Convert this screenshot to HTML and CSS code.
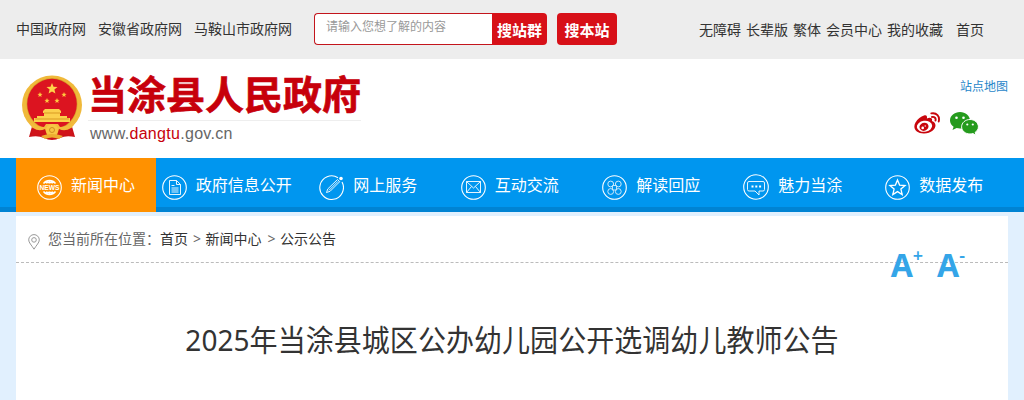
FILE: index.html
```html
<!DOCTYPE html>
<html lang="zh-CN">
<head>
    <meta charset="UTF-8">
    <meta name="viewport" content="width=device-width, initial-scale=1.0">
    <title>2025年当涂县城区公办幼儿园公开选调幼儿教师公告</title>
    <link rel="stylesheet" href="styles.css">
</head>
<body>

<div class="topbar">
    <div class="container topbar-inner">
        <div class="gov-links">
            <a href="#">中国政府网</a>
            <a href="#">安徽省政府网</a>
            <a href="#">马鞍山市政府网</a>
        </div>
        <form class="search">
            <input type="text" class="search-input" placeholder="请输入您想了解的内容">
            <button type="button" class="btn-group">搜站群</button>
            <button type="button" class="btn-site">搜本站</button>
        </form>
        <div class="user-links">
            <a href="#">无障碍</a>
            <a href="#">长辈版</a>
            <a href="#">繁体</a>
            <a href="#">会员中心</a>
            <a href="#">我的收藏</a>
            <a href="#" class="home">首页</a>
        </div>
    </div>
</div>

<header class="header">
    <div class="container header-inner">
        <div class="logo">
            <svg class="emblem" width="62" height="66" viewBox="0 0 62 66">
                <path d="M12 48L8 62Q17 60 23 63Q31 67 39 63Q45 60 54 62L50 48Z" fill="#c9121a"/>
                <ellipse cx="31" cy="30" rx="30" ry="29.5" fill="#f0b93a"/>
                <ellipse cx="31" cy="29" rx="25.5" ry="26" fill="#d8a02b"/>
                <ellipse cx="31" cy="29" rx="24.8" ry="25.3" fill="#dc1420"/>
                <path d="M31 8l1.5 3.700 4 .3-3.100 2.600 1 3.900-3.400-2.100-3.400 2.100 1-3.900-3.100-2.600 4-.3z" fill="#ffd34a"/>
                <path d="M19 17l.7 1.800 1.900.1-1.500 1.200.5 1.900-1.600-1-1.600 1 .5-1.900-1.500-1.200 1.900-.1zM43 17l.7 1.800 1.900.1-1.500 1.200.5 1.900-1.600-1-1.600 1 .5-1.900-1.500-1.200 1.900-.1zM26 23l.7 1.800 1.900.1-1.500 1.200.5 1.900-1.600-1-1.600 1 .5-1.900-1.500-1.200 1.900-.1zM36 23l.7 1.800 1.900.1-1.500 1.200.5 1.900-1.600-1-1.600 1 .5-1.900-1.500-1.200 1.900-.1z" fill="#ffc83e"/>
                <path d="M22 36l2-2h14l2 2v2h-1v3h7v2h3v4H13v-4h3v-2h7v-3h-1z" fill="#fcd04d"/>
                <path d="M23 38h16M14 44h34" stroke="#d99a24" fill="none"/>
                <path d="M6 45Q14 52 23 52L25 49H37L39 52Q48 52 56 45L49 55Q42 57 38 55L36 60H26L24 55Q20 57 13 55Z" fill="#f3bb3d"/>
                <path d="M12 53Q18 57 24 54L26 60Q19 59 10 61ZM50 53Q44 57 38 54L36 60Q43 59 52 61Z" fill="#d0131a"/>
                <circle cx="31" cy="55" r="6" fill="#f8c645"/>
                <circle cx="31" cy="55" r="2.500" fill="none" stroke="#cf8d22"/>
                <path d="M20 61q11-4 22 0l-4 3q-7-3-14 0z" fill="#edae31"/>
            </svg>
            <div class="logo-text">
                <h1>当涂县人民政府</h1>
                <p>www.<span>dangtu</span>.gov.cn</p>
            </div>
        </div>
        <div class="header-side">
            <a href="#" class="sitemap">站点地图</a>
            <div class="social">
                <svg width="27" height="23" viewBox="0 0 27 23">
                    <path d="M10 3.500c2.200-1 3.500.4 2.900 2.900 3.600-1.300 6-.3 5 2.700 7 2.400 3.400 12.200-7.900 12.400C2.300 21.600-1.800 16.500 1.500 10.500 3.500 7 7 4.500 10 3.500z" fill="#c8060d"/>
                    <ellipse cx="10.500" cy="14.300" rx="7.700" ry="5.500" fill="#fff" transform="rotate(-8 10.500 14.300)"/>
                    <ellipse cx="10" cy="14.800" rx="4.600" ry="4" fill="#c8060d" transform="rotate(-20 10 14.800)"/>
                    <circle cx="8.700" cy="15.900" r="1.300" fill="#fff"/>
                    <circle cx="11.200" cy="14" r=".7" fill="#fff"/>
                    <path d="M17.300 1.400c5.300-1 8.800 3 7.400 8.100M18 5c2.600-.5 4.100 1.300 3.500 3.600" fill="none" stroke="#c8060d" stroke-width="1.900" stroke-linecap="round"/>
                </svg>
                <svg width="29" height="24" viewBox="0 0 29 24">
                    <path d="M10 0C4.500 0 0 3.700 0 8.400c0 2.600 1.400 4.800 3.600 6.300L2.500 18l4.100-2c1.100.3 2.200.5 3.400.5 5.500 0 10-3.600 10-8.100S15.500 0 10 0z" fill="#259b1d"/>
                    <path d="M20 7.500c-4.600 0-8.400 3.200-8.400 7.300s3.800 7.200 8.400 7.200c1 0 2-.2 2.900-.5l3.100 1.800-.9-2.900c2-1.300 3.300-3.300 3.300-5.600 0-4.100-3.800-7.300-8.400-7.300z" fill="#259b1d" stroke="#fff"/>
                    <g fill="#fff">
                        <circle cx="6.500" cy="5.700" r="1.300"/><circle cx="13.500" cy="5.700" r="1.300"/>
                        <circle cx="17.300" cy="12.500" r="1.100"/><circle cx="22.800" cy="12.500" r="1.100"/>
                    </g>
                </svg>
            </div>
        </div>
    </div>
</header>

<nav class="nav">
    <div class="container nav-inner">
        <a href="#" class="active">
            <svg class="icon" viewBox="0 0 25 25">
                <circle cx="12.500" cy="12.500" r="11.800"/>
                <path class="globe" d="M6.500 8.500a7.500 7.500 0 0 1 12 0M6.500 16.500a7.500 7.500 0 0 0 12 0M12.500 5.500v3M12.500 16.500v3M9 7.500h7M9 17.500h7M9.500 6v2.500M15.500 6v2.500M9.500 16.500V19M15.500 16.500V19"/>
                <text x="12.500" y="15.100" textLength="20" lengthAdjust="spacingAndGlyphs">NEWS</text>
            </svg>
            新闻中心
        </a>
        <a href="#">
            <svg class="icon" viewBox="0 0 25 25">
                <circle cx="12.500" cy="12.500" r="11.800"/>
                <path d="M7.500 5.500h7l4 4v10h-11zM14.500 5.500v4h4M9.500 10.500h3M9.500 13h7M9.500 15h7M9.500 17h7"/>
            </svg>
            政府信息公开
        </a>
        <a href="#">
            <svg class="icon" viewBox="0 0 25 25">
                <path d="M19 2.700A11.800 11.800 0 1 0 23 7" class="ring"/>
                <path d="M7.500 17.500l1.300-3.600L18.500 4.500l2.200 2.200-9.600 9.600zM10 15.300l9-9"/>
                <circle cx="22" cy="3.500" r="1.800" class="solid"/>
            </svg>
            网上服务
        </a>
        <a href="#">
            <svg class="icon" viewBox="0 0 25 25">
                <circle cx="12.500" cy="12.500" r="11.800"/>
                <path d="M5.500 6.500h14v11h-14zM5.500 6.500l7 6.500 7-6.500M5.500 17.500l5-6M19.500 17.500l-5-6"/>
            </svg>
            互动交流
        </a>
        <a href="#">
            <svg class="icon" viewBox="0 0 25 25">
                <circle cx="12.500" cy="12.500" r="11.800"/>
                <g class="clover">
                    <circle cx="8.700" cy="9" r="2.900"/><circle cx="16.300" cy="9" r="2.900"/>
                    <circle cx="8.700" cy="16.500" r="2.900"/><circle cx="16.300" cy="16.500" r="2.900"/>
                    <path d="M10.500 10.500h4v4.500h-4z"/>
                </g>
            </svg>
            解读回应
        </a>
        <a href="#">
            <svg class="icon icon-chat" viewBox="0 0 26 26">
                <circle cx="13" cy="13" r="12.300"/>
                <path d="M7 7.500h13q1.500 0 1.500 1.500v6.500q0 1.500-1.500 1.500h-4v4l-4-4H6q-1.500 0-1.500-1.500V9q0-1.500 1.500-1.500z"/>
                <path d="M8.500 12.500h2M12.300 12.500h2M16.100 12.500h2" class="dots"/>
            </svg>
            魅力当涂
        </a>
        <a href="#">
            <svg class="icon" viewBox="0 0 25 25">
                <circle cx="12.500" cy="12.500" r="11.800"/>
                <path class="star" d="M12.500 5l2.100 5.100 5.500.4-4.200 3.600 1.300 5.400-4.700-2.900-4.700 2.900 1.300-5.400-4.200-3.600 5.500-.4z"/>
            </svg>
            数据发布
        </a>
    </div>
</nav>

<main class="container content">
    <div class="crumb">
        <svg class="pin" width="12" height="16" viewBox="0 0 12 16">
            <path d="M6 15.200C3.500 11 .7 8.700.7 5.900a5.300 5.300 0 0 1 10.600 0C11.300 8.700 8.500 11 6 15.200z"/>
            <circle cx="6" cy="5.900" r="2.300"/>
        </svg>
        <span>您当前所在位置：</span>
        <a href="#">首页</a>
        <i>&gt;</i>
        <a href="#">新闻中心</a>
        <i class="last">&gt;</i>
        <a href="#">公示公告</a>
        <div class="font-size">
            <a href="#">A<sup>+</sup></a>
            <a href="#">A<sup>-</sup></a>
        </div>
    </div>
    <h2 class="title">2025年当涂县城区公办幼儿园公开选调幼儿教师公告</h2>
</main>

</body>
</html>
```
FILE: styles.css
```css
* {
    margin: 0;
    padding: 0;
    box-sizing: border-box;
}

body {
    font-family: "Noto Sans", "Noto Sans CJK SC", sans-serif;
    font-size: 14px;
    color: #333;
    background: #e1f0fe;
    overflow: hidden;
}

a {
    color: inherit;
    text-decoration: none;
}

svg {
    flex: none;
}

.container {
    width: 992px;
    margin: 0 auto;
}

/* top bar */
.topbar {
    height: 59px;
    background: #ededed;
}

.topbar-inner {
    display: flex;
    height: 59px;
    line-height: 20px;
}

.gov-links {
    display: flex;
    gap: 12px;
    width: 298px;
    padding-top: 19px;
}

.search {
    display: flex;
    height: 32px;
    margin-top: 13px;
}

.search-input {
    width: 178px;
    padding: 0 11px 6px;
    border: 1px solid #c3151c;
    border-right: none;
    border-radius: 4px 0 0 4px;
    background: #fff;
    font-family: inherit;
    font-size: 12px;
}

.search-input::placeholder {
    color: #999;
}

.search button {
    border: none;
    background: #d71018;
    color: #fff;
    font-family: inherit;
    font-size: 15px;
    font-weight: bold;
    white-space: nowrap;
}

.search .btn-group {
    width: 55px;
    border-radius: 0 4px 4px 0;
}

.search .btn-site {
    width: 60px;
    margin-left: 10px;
    border-radius: 4px;
}

.user-links {
    display: flex;
    gap: 5px;
    margin-left: auto;
    padding: 20px 24px 0 0;
}

.user-links .home {
    margin-left: 8px;
}

/* logo area */
.header {
    height: 99px;
    background: #fff;
}

.header-inner {
    display: flex;
    justify-content: space-between;
}

.logo {
    display: flex;
    padding: 16px 0 0 5px;
}

.logo-text {
    margin-left: 5px;
}

.logo h1 {
    height: 46px;
    border-bottom: 1px solid #eee;
    color: #c7000b;
    font-size: 39px;
    line-height: 37px;
    white-space: nowrap;
    -webkit-text-stroke: 0.7px #c7000b;
}

.logo p {
    padding-left: 2px;
    color: #666;
    font-family: "Liberation Sans", Arial, sans-serif;
    font-size: 16px;
    line-height: 25px;
    letter-spacing: 0.3px;
}

.logo p span {
    color: #c7000b;
}

.header-side {
    padding-top: 19px;
}

.sitemap {
    display: block;
    color: #1f86c9;
    font-size: 12px;
    line-height: 18px;
    text-align: right;
}

.social {
    display: flex;
    gap: 9px;
    padding: 16px 29px 0 0;
}

/* main nav */
.nav {
    height: 54px;
    background: #0096ef;
    border-bottom: 5px solid #0083d3;
}

.nav-inner {
    display: flex;
}

.nav a {
    display: flex;
    align-items: center;
    justify-content: center;
    gap: 9px;
    width: 141.500px;
    height: 54px;
    color: #fff;
    font-size: 16px;
    line-height: 24px;
    white-space: nowrap;
}

.nav a.active {
    width: 140px;
    background: #ff9100;
}

.icon {
    width: 25px;
    height: 25px;
    margin-top: 5px;
    fill: none;
    stroke: #fff;
    stroke-width: 1.100;
}

.icon path {
    stroke-width: 0.900;
}

.icon .ring {
    stroke-width: 1.100;
}

.icon .globe {
    stroke-width: 1.300;
}

.icon .star {
    stroke-width: 1.300;
}

.icon .clover {
    stroke-width: 1;
    opacity: 0.800;
}

.icon-chat {
    width: 26px;
    height: 26px;
    margin-top: 3px;
}

.icon .dots {
    stroke-width: 1.800;
}

.icon .solid {
    fill: #fff;
    stroke: none;
}

.icon text {
    fill: #fff;
    stroke: none;
    font-family: "Liberation Sans", Arial, sans-serif;
    font-size: 7px;
    font-weight: bold;
    text-anchor: middle;
}

/* content */
.content {
    height: 184px;
    margin-top: 4px;
    background: #fff;
}

.crumb {
    position: relative;
    display: flex;
    height: 47px;
    padding-left: 12px;
    border-bottom: 1px dashed #bbb;
    line-height: 46px;
}

.crumb span {
    color: #666;
}

.crumb i {
    margin: 0 4.500px 0 5px;
    color: #666;
    font-style: normal;
}

.crumb i.last {
    margin-left: 6px;
}

.pin {
    margin: 18px 8px 0 0;
    fill: none;
    stroke: #999;
}

/* text size buttons sit over the dashed line */
.font-size {
    position: absolute;
    top: 29px;
    right: 43px;
    display: flex;
    gap: 14px;
    color: #34a5e8;
    font-size: 32px;
    font-weight: bold;
    line-height: 40px;
}

.font-size sup {
    font-size: 18px;
    font-weight: 600;
    line-height: 1;
    vertical-align: 15px;
}

.title {
    padding-top: 56px;
    font-size: 28px;
    font-weight: normal;
    line-height: 40px;
    letter-spacing: 0.050px;
    text-align: center;
    transform: scaleY(1.060);
    transform-origin: 50% 76px;
}
```
